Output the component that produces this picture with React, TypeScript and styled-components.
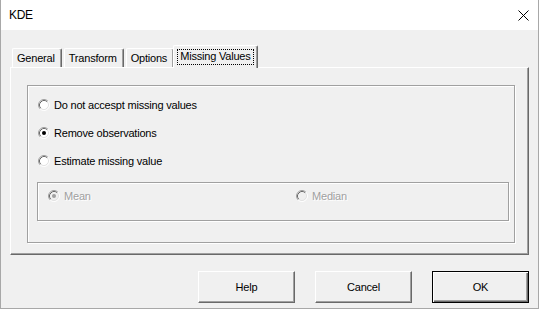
import React from "react";
import styled, { createGlobalStyle } from "styled-components";

const Global = createGlobalStyle`
  html, body { margin: 0; padding: 0; background: #f0f0f0; }
  body { font-family: "Liberation Sans", Arial, sans-serif; font-size: 11px; color: #000; }
  * { box-sizing: border-box; }
`;

const Window = styled.div`
  width: 539px;
  height: 309px;
  display: flex;
  flex-direction: column;
  background: #f0f0f0;
  border-left: 1px solid #a8a8a8;
  border-right: 1px solid #a8a8a8;
  border-bottom: 1px solid #a8a8a8;
`;

const TitleBar = styled.div`
  height: 30px;
  flex: none;
  background: #fff;
  display: flex;
  align-items: center;
  justify-content: space-between;
  padding: 0 9px 0 8px;
`;

const Title = styled.span`
  font-size: 12px;
  letter-spacing: -0.3px;
`;

const Body = styled.div`
  flex: 1;
  display: flex;
  flex-direction: column;
  padding: 15px 9px 0 9px;
`;

const TabStrip = styled.div`
  display: flex;
  align-items: flex-end;
  height: 22px;
  padding-left: 2px;
  position: relative;
  z-index: 1;
`;

const Tab = styled.div<{ $active?: boolean }>`
  height: ${(p) => (p.$active ? 23 : 19)}px;
  margin-bottom: ${(p) => (p.$active ? -1 : 0)}px;
  margin-right: ${(p) => (p.$active ? 0 : 2)}px;
  margin-left: ${(p) => (p.$active ? -3 : 0)}px;
  padding: ${(p) => (p.$active ? "3px 3px 0 3px" : "3px 6px 0 4px")};
  background: #f0f0f0;
  border-top: 1px solid #fff;
  border-left: 1px solid #fff;
  border-right: 1px solid #696969;
  box-shadow: inset -1px 0 0 #a0a0a0;
  border-top-left-radius: 2px;
  border-top-right-radius: 2px;
  letter-spacing: -0.2px;
  white-space: nowrap;
`;

const FocusLabel = styled.span`
  display: inline-block;
  border: 1px dotted #000;
  padding: 0 2px 1px 2px;
  line-height: 13px;
`;

const Panel = styled.div`
  height: 188px;
  border-top: 1px solid #fff;
  border-left: 1px solid #fff;
  border-right: 1px solid #696969;
  border-bottom: 1px solid #696969;
  box-shadow: inset -1px -1px 0 #a0a0a0;
  padding: 17px 13px 0 16px;
`;

const GroupBox = styled.div<{ $h: number }>`
  height: ${(p) => p.$h}px;
  border: 1px solid #a0a0a0;
  box-shadow: inset 1px 1px 0 #fff, 1px 1px 0 #fff;
`;

const OuterGroup = styled(GroupBox)`
  padding: 5px 5px 0 9px;
  display: flex;
  flex-direction: column;
`;

const InnerGroup = styled(GroupBox)`
  margin-top: 7px;
  display: flex;
  align-items: center;
  padding: 0 0 12px 10px;
`;

const RadioRow = styled.div<{ $width?: number; $disabled?: boolean }>`
  display: flex;
  align-items: center;
  gap: 4px;
  height: ${(p) => (p.$width ? 24 : 28)}px;
  padding-left: ${(p) => (p.$width ? 0 : 1)}px;
  width: ${(p) => (p.$width ? `${p.$width}px` : "auto")};
  color: ${(p) => (p.$disabled ? "#a0a0a0" : "#000")};
  text-shadow: ${(p) => (p.$disabled ? "1px 1px 0 #fff" : "none")};
  letter-spacing: -0.2px;
`;

const Footer = styled.div`
  display: flex;
  justify-content: flex-end;
  gap: 20px;
  padding: 16px 0 0 0;
`;

const Button = styled.div<{ $default?: boolean }>`
  width: 97px;
  height: 32px;
  display: flex;
  align-items: center;
  justify-content: center;
  background: #f0f0f0;
  border-top: 1px solid #fff;
  border-left: 1px solid #fff;
  border-right: 1px solid #696969;
  border-bottom: 1px solid #696969;
  box-shadow: inset -1px -1px 0 #a0a0a0;
  letter-spacing: -0.2px;
  ${(p) =>
    p.$default &&
    `
    border: 1px solid #000;
    box-shadow: inset 1px 1px 0 #fff, inset -1px -1px 0 #696969, inset -2px -2px 0 #a0a0a0;
  `}
`;

const RadioSvg = styled.svg`
  flex: none;
  display: block;
`;

function Radio({ checked, disabled }: { checked?: boolean; disabled?: boolean }) {
  return (
    <RadioSvg width="12" height="12" viewBox="0 0 12 12">
      <circle cx="6" cy="6" r="5" fill={disabled ? "#f0f0f0" : "#fff"} />
      <path d="M2.11 9.89 A5.5 5.5 0 0 1 9.89 2.11" fill="none" stroke="#a0a0a0" strokeWidth="1" />
      <path d="M9.89 2.11 A5.5 5.5 0 0 1 2.11 9.89" fill="none" stroke="#fff" strokeWidth="1" />
      <path d="M2.82 9.18 A4.5 4.5 0 0 1 9.18 2.82" fill="none" stroke="#696969" strokeWidth="1" />
      <path d="M9.18 2.82 A4.5 4.5 0 0 1 2.82 9.18" fill="none" stroke="#e3e3e3" strokeWidth="1" />
      {checked && <circle cx="6" cy="6" r="2" fill={disabled ? "#a0a0a0" : "#000"} />}
    </RadioSvg>
  );
}

export default function App() {
  return (
    <>
      <Global />
      <Window>
        <TitleBar>
          <Title>KDE</Title>
          <svg width="11" height="11" viewBox="0 0 11 11">
            <path d="M0.5 0.5 L10.5 10.5 M10.5 0.5 L0.5 10.5" stroke="#000" strokeWidth="1" />
          </svg>
        </TitleBar>
        <Body>
          <TabStrip>
            <Tab>General</Tab>
            <Tab>Transform</Tab>
            <Tab>Options</Tab>
            <Tab $active>
              <FocusLabel>Missing Values</FocusLabel>
            </Tab>
          </TabStrip>
          <Panel>
            <OuterGroup $h={158}>
              <RadioRow>
                <Radio />
                Do not accespt missing values
              </RadioRow>
              <RadioRow>
                <Radio checked />
                Remove observations
              </RadioRow>
              <RadioRow>
                <Radio />
                Estimate missing value
              </RadioRow>
              <InnerGroup $h={39}>
                <RadioRow $width={248} $disabled>
                  <Radio checked disabled />
                  Mean
                </RadioRow>
                <RadioRow $width={120} $disabled>
                  <Radio disabled />
                  Median
                </RadioRow>
              </InnerGroup>
            </OuterGroup>
          </Panel>
          <Footer>
            <Button>Help</Button>
            <Button>Cancel</Button>
            <Button $default>OK</Button>
          </Footer>
        </Body>
      </Window>
    </>
  );
}
